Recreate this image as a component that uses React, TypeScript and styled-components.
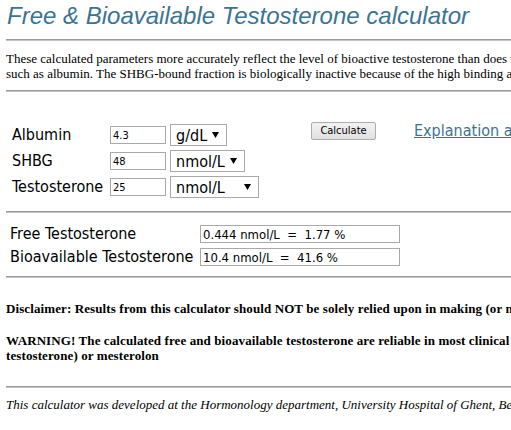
import { Fragment } from "react";
import styled, { createGlobalStyle } from "styled-components";

const GlobalStyle = createGlobalStyle`
  html, body {
    margin: 0;
    padding: 0;
    overflow: hidden;
    background: #ffffff;
  }
`;

const Page = styled.div`
  width: 1100px;
  padding: 2px 6px 20px;
  font-family: "Liberation Serif", "Times New Roman", serif;
  color: #000;
`;

const Title = styled.h1`
  margin: 0 0 0 1px;
  font-family: "Liberation Sans", Arial, sans-serif;
  font-style: italic;
  font-weight: normal;
  font-size: 24px;
  color: #3a7494;
`;

const Rule = styled.hr<{ $top?: number; $bottom?: number }>`
  height: 0;
  margin: ${({ $top = 8 }) => $top}px 0 ${({ $bottom = 8 }) => $bottom}px;
  border: none;
  border-top: 1px solid #9a9a9a;
  border-bottom: 1px solid #c4c4c4;
`;

const Intro = styled.p`
  margin: 0;
  font-size: 13px;
  line-height: 15px;
  white-space: nowrap;
`;

const FormSection = styled.div`
  display: flex;
  align-items: flex-start;
  padding: 32px 0 13px 6px;
`;

const InputGrid = styled.div`
  display: grid;
  grid-template-columns: 98px 60px auto;
  row-gap: 4px;
  align-items: center;
  justify-items: start;
`;

const Label = styled.span`
  font-family: Tahoma, "DejaVu Sans Condensed", "Liberation Sans", sans-serif;
  font-size: 16px;
  line-height: 18px;
  white-space: nowrap;
`;

const SmallInput = styled.input`
  box-sizing: border-box;
  width: 56px;
  height: 18px;
  padding: 0 2px;
  border: 1px solid #a9a9a9;
  font-family: Tahoma, "DejaVu Sans Condensed", "Liberation Sans", sans-serif;
  font-size: 11px;
  color: #000;
`;

const SelectBox = styled.label<{ $width: number }>`
  box-sizing: border-box;
  display: flex;
  align-items: center;
  width: ${({ $width }) => $width}px;
  height: 22px;
  padding: 0 7px 0 5px;
  border: 1px solid #a9a9a9;
  background: #fff;
`;

const Select = styled.select`
  flex: 1;
  min-width: 0;
  appearance: none;
  border: none;
  outline: none;
  padding: 0;
  background: transparent;
  font-family: Tahoma, "DejaVu Sans Condensed", "Liberation Sans", sans-serif;
  font-size: 16px;
  color: #000;
`;

const Actions = styled.div`
  display: flex;
  align-items: center;
  gap: 38px;
  margin: -3px 0 0 52px;
`;

const Button = styled.button`
  box-sizing: border-box;
  width: 65px;
  height: 18px;
  padding: 0;
  border: 1px solid #adadad;
  border-radius: 2px;
  background: linear-gradient(#f2f2f2, #e1e1e1);
  font-family: Tahoma, "DejaVu Sans Condensed", "Liberation Sans", sans-serif;
  font-size: 11px;
  color: #000;
`;

const Link = styled.a`
  font-family: Tahoma, "DejaVu Sans Condensed", "Liberation Sans", sans-serif;
  font-size: 16px;
  color: #3a7494;
  text-decoration: underline;
  white-space: nowrap;
`;

const ResultGrid = styled.div`
  display: grid;
  grid-template-columns: 190px 200px;
  row-gap: 5px;
  align-items: center;
  padding: 12px 0 10px 4px;
`;

const ResultInput = styled.input`
  box-sizing: border-box;
  width: 200px;
  height: 18px;
  padding: 0 2px;
  border: 1px solid #a9a9a9;
  font-family: Tahoma, "DejaVu Sans Condensed", "Liberation Sans", sans-serif;
  font-size: 13px;
  color: #000;
  white-space: pre;
`;

const Notice = styled.p<{ $top: number }>`
  margin: ${({ $top }) => $top}px 0 0;
  font-size: 13px;
  line-height: 15px;
  font-weight: bold;
  letter-spacing: 0.1px;
  white-space: nowrap;
`;

const Footer = styled.p`
  margin: 0;
  font-size: 13px;
  line-height: 15px;
  font-style: italic;
  white-space: nowrap;
`;

const Arrow = () => (
  <svg width="7" height="6" viewBox="0 0 7 6">
    <path d="M0 0h7L3.5 6z" fill="#000" />
  </svg>
);

const fields = [
  { label: "Albumin", value: "4.3", units: ["g/dL", "g/L"], width: 57 },
  { label: "SHBG", value: "48", units: ["nmol/L"], width: 75 },
  { label: "Testosterone", value: "25", units: ["nmol/L", "ng/dL", "ng/mL"], width: 89 },
];

const results = [
  { label: "Free Testosterone", value: "0.444 nmol/L  =  1.77 %" },
  { label: "Bioavailable Testosterone", value: "10.4 nmol/L  =  41.6 %" },
];

export default function App() {
  return (
    <Page>
      <GlobalStyle />
      <Title>Free &amp; Bioavailable Testosterone calculator</Title>
      <Rule $top={9} $bottom={10} />
      <Intro>
        These calculated parameters more accurately reflect the level of bioactive testosterone than does total testosterone, because only the fraction not bound to proteins or loosely bound to proteins
        <br />
        such as albumin. The SHBG-bound fraction is biologically inactive because of the high binding affinity of SHBG for testosterone.
      </Intro>
      <Rule $top={9} $bottom={0} />

      <FormSection>
        <InputGrid>
          {fields.map((f) => (
            <Fragment key={f.label}>
              <Label>{f.label}</Label>
              <SmallInput defaultValue={f.value} />
              <SelectBox $width={f.width}>
                <Select defaultValue={f.units[0]}>
                  {f.units.map((u) => (
                    <option key={u}>{u}</option>
                  ))}
                </Select>
                <Arrow />
              </SelectBox>
            </Fragment>
          ))}
        </InputGrid>
        <Actions>
          <Button>Calculate</Button>
          <Link href="#">Explanation and formulas</Link>
        </Actions>
      </FormSection>

      <Rule $top={0} $bottom={0} />
      <ResultGrid>
        {results.map((r) => (
          <Fragment key={r.label}>
            <Label>{r.label}</Label>
            <ResultInput readOnly value={r.value} />
          </Fragment>
        ))}
      </ResultGrid>
      <Rule $top={0} $bottom={0} />

      <Notice $top={23}>
        Disclaimer: Results from this calculator should NOT be solely relied upon in making (or not making) any diagnosis or treatment decision.
      </Notice>
      <Notice $top={17}>
        WARNING! The calculated free and bioavailable testosterone are reliable in most clinical situations, but not in patients treated with androgens that bind to SHBG, such as DHT (dihydro-
        <br />
        testosterone) or mesterolon
      </Notice>
      <Rule $top={23} $bottom={9} />
      <Footer>
        This calculator was developed at the Hormonology department, University Hospital of Ghent, Belgium.
      </Footer>
    </Page>
  );
}
